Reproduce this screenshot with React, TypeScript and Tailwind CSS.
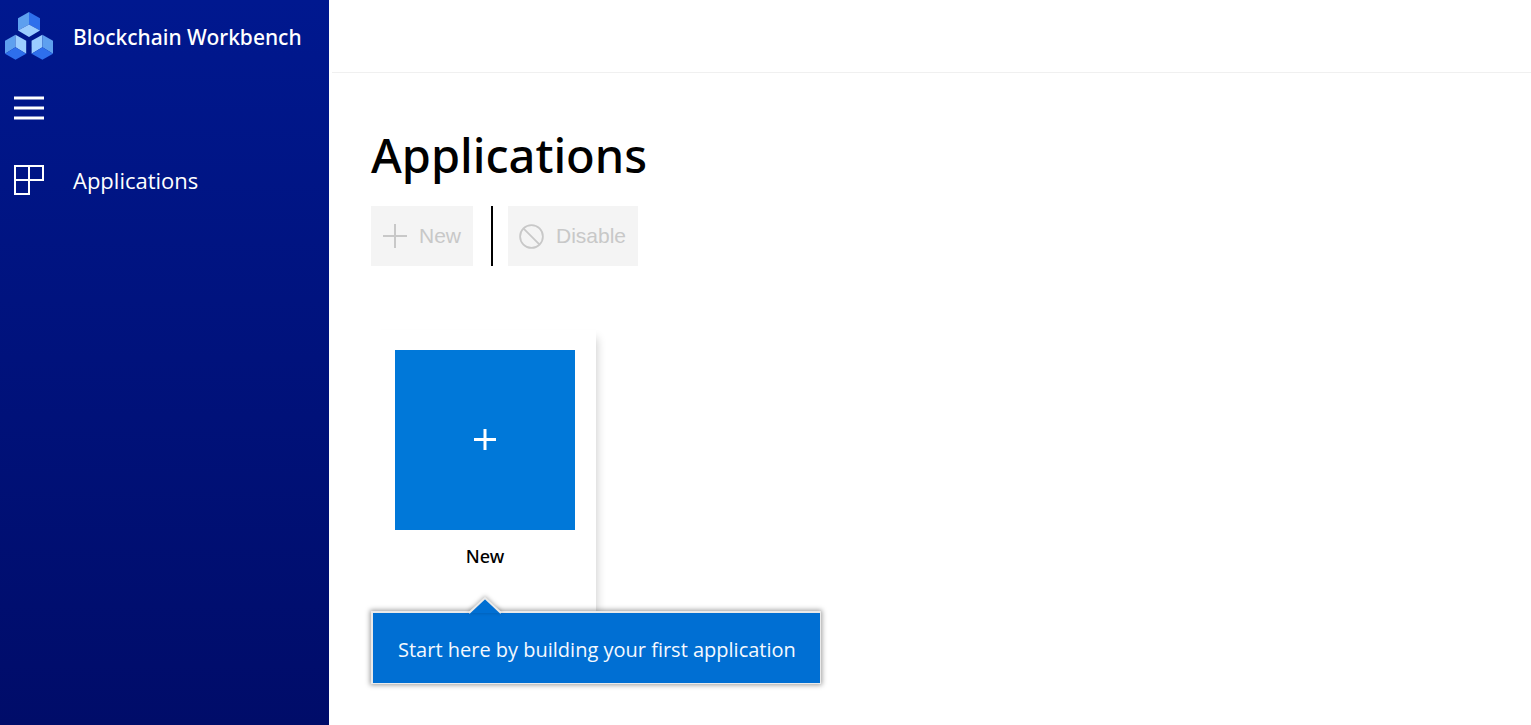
import React from "react";

function Logo() {
  return (
    <svg width="48" height="48" viewBox="0 0 48 48" aria-hidden="true">
      <path d="M24 0 L13 6.2 V18.6 L24 12.4 Z" fill="#5ea0ef" />
      <path d="M24 0 L35 6.2 V18.6 L24 12.4 Z" fill="#2e6fec" />
      <path d="M24 12.4 L35 18.6 L24 25 L13 18.6 Z" fill="#9bcdff" />
      <path d="M10.5 22.8 L0 28.8 V41.8 L10.5 35.2 Z" fill="#5ea0ef" />
      <path d="M10.5 22.8 L21.2 28.8 V41.8 L10.5 35.2 Z" fill="#9bcdff" />
      <path d="M10.5 35.2 L21.2 41.8 L10.5 47.8 L0 41.8 Z" fill="#2e6fec" />
      <path d="M37.4 22.8 L26.6 28.8 V41.8 L37.4 35.2 Z" fill="#9bcdff" />
      <path d="M37.4 22.8 L48 28.8 V41.8 L37.4 35.2 Z" fill="#5ea0ef" />
      <path d="M37.4 35.2 L48 41.8 L37.4 47.8 L26.6 41.8 Z" fill="#2e6fec" />
    </svg>
  );
}

export default function App() {
  return (
    <div className="flex min-h-screen bg-white font-['Noto_Sans','Open_Sans',sans-serif] text-black">
      <aside className="w-[329px] shrink-0 bg-linear-to-b from-[#00188f] to-[#000c69] text-white">
        <div className="flex h-[72px] items-center gap-5 pl-[5px]">
          <Logo />
          <span className="whitespace-nowrap pt-[3px] text-[21px] font-medium">Blockchain Workbench</span>
        </div>
        <button type="button" aria-label="Toggle menu" className="flex h-[72px] items-center pl-[14px]">
          <svg width="30" height="24" viewBox="0 0 30 24" stroke="#fff" strokeWidth="3.2" aria-hidden="true">
            <path d="M0 2H30M0 12H30M0 22H30" />
          </svg>
        </button>
        <nav>
          <a href="#applications" className="flex h-[72px] items-center gap-[29px] pl-[14px] font-['Open_Sans',sans-serif] text-[22px]">
            <svg width="30" height="30" viewBox="0 0 30 30" fill="none" stroke="#fff" strokeWidth="2" aria-hidden="true">
              <path d="M1 1H29V15H1ZM15 1V29H1V1" />
            </svg>
            Applications
          </a>
        </nav>
      </aside>

      <div className="flex min-w-0 flex-1 flex-col">
        <header className="ml-[3px] h-[73px] border-b border-[#f0f0f0]" />
        <main className="px-[42px] pt-12">
          <h1 className="text-[47px] font-medium leading-[68px]">Applications</h1>

          <div className="mt-[17px] flex h-[60px] font-['Liberation_Sans',Arial,sans-serif] text-[21px] text-[#c8c8c8]">
            <button type="button" disabled className="flex items-center gap-3 bg-[#f4f4f4] px-3">
              <svg width="24" height="24" viewBox="0 0 24 24" stroke="currentColor" strokeWidth="2" aria-hidden="true">
                <path d="M12 0V24M0 12H24" />
              </svg>
              New
            </button>
            <div className="mr-[15px] ml-[18px] w-[2px] bg-black" />
            <button type="button" disabled className="flex items-center gap-3 bg-[#f4f4f4] pr-3 pl-[11px]">
              <svg width="25" height="25" viewBox="0 0 25 25" fill="none" stroke="currentColor" strokeWidth="1.8" aria-hidden="true">
                <circle cx="12.5" cy="12.5" r="11.4" />
                <path d="M4.4 4.4L20.6 20.6" />
              </svg>
              Disable
            </button>
          </div>

          <div className="relative mt-16 w-[225px]">
            <button
              type="button"
              className="flex h-[300px] w-full flex-col items-center bg-white pt-5 pl-[3px] shadow-[5px_4px_9px_-4px_rgba(0,0,0,0.2)]"
            >
              <span className="flex size-[180px] items-center justify-center bg-[#0078d9]">
                <svg width="22" height="22" viewBox="0 0 22 22" stroke="#fff" strokeWidth="3" aria-hidden="true">
                  <path d="M11 0V21M0 10.5H22" />
                </svg>
              </span>
              <span className="mt-3 text-lg font-medium">New</span>
            </button>
            <div
              role="tooltip"
              className="absolute top-[281px] left-0 flex h-[73px] items-center justify-center whitespace-nowrap border-t-2 border-r border-b border-l-2 border-[#eaeaea] bg-[#006fd3] pt-[3px] pr-6 pl-[25px] font-['Open_Sans',sans-serif] text-xl text-[#f4f9ff] shadow-[0_0_5px_1px_rgba(0,0,0,0.4)]"
            >
              <svg width="32" height="17" viewBox="0 0 32 17" className="absolute -top-4 left-[96px] overflow-visible drop-shadow-[0_-1px_2px_rgba(0,0,0,0.3)]" aria-hidden="true">
                <path d="M0 16L16 1L32 16Z" fill="#006fd3" />
                <path d="M0 16L16 1L32 16" fill="none" stroke="#eaeaea" strokeWidth="2" />
              </svg>
              Start here by building your first application
            </div>
          </div>
        </main>
      </div>
    </div>
  );
}
